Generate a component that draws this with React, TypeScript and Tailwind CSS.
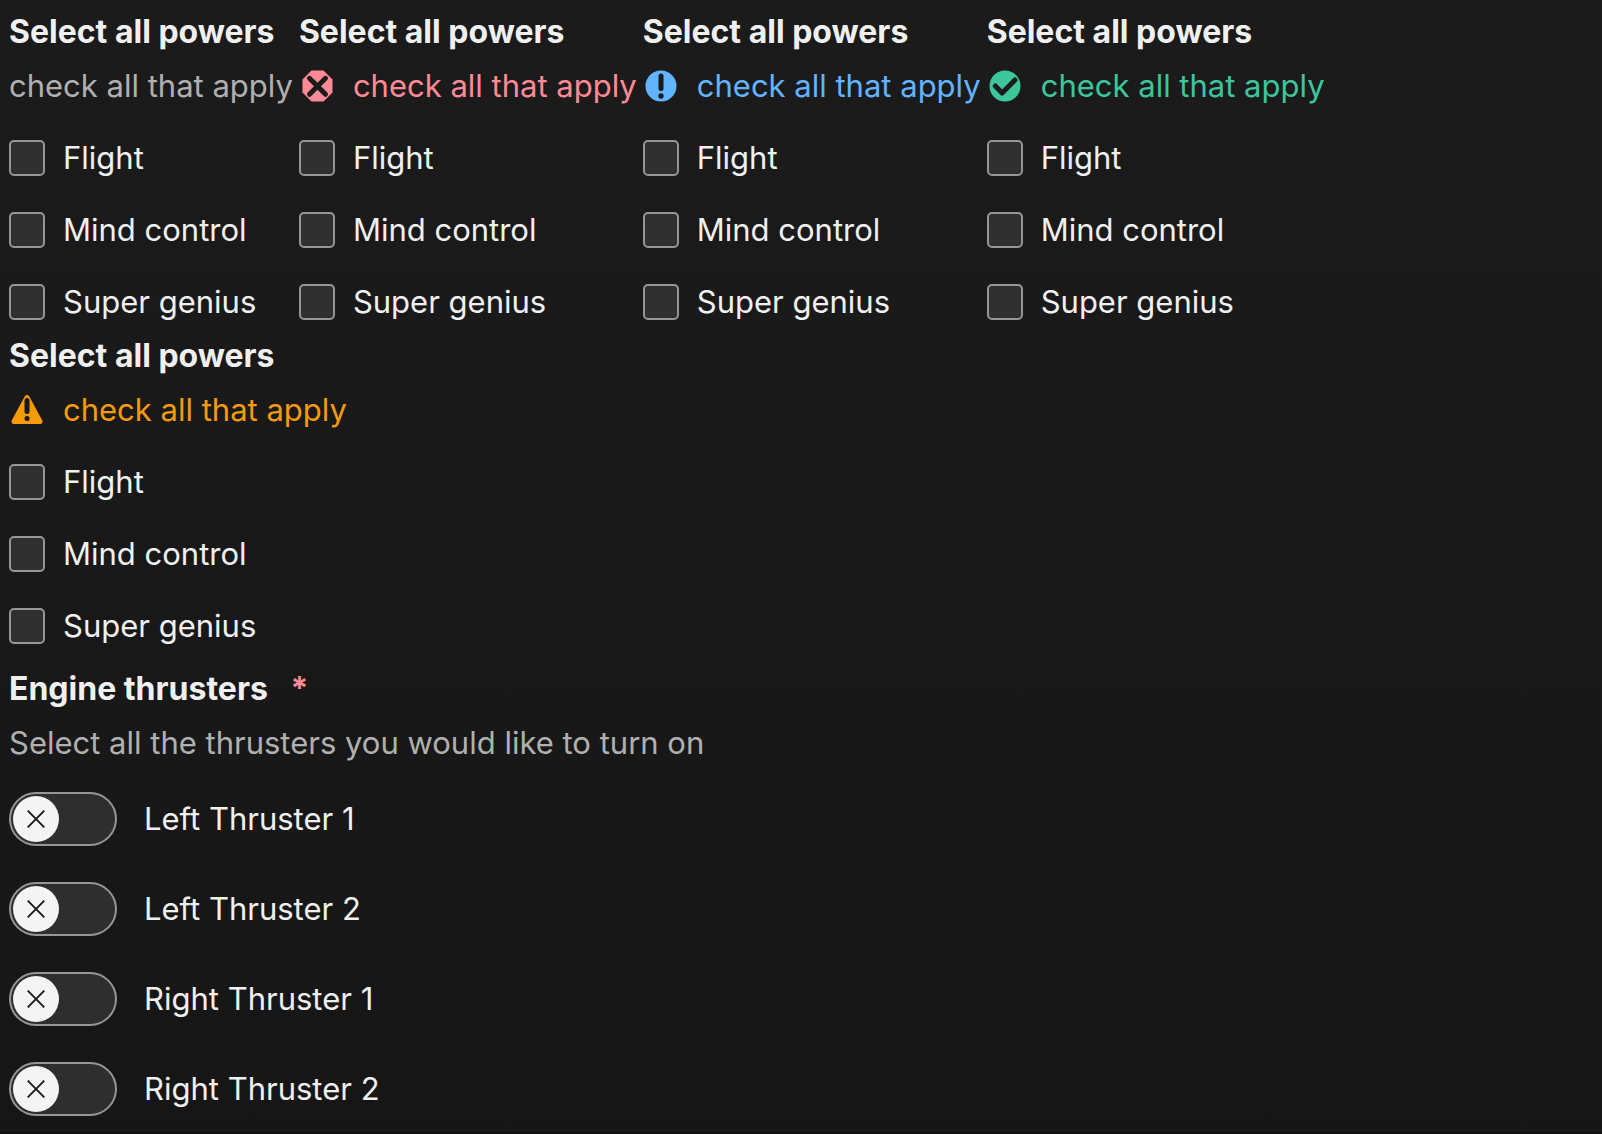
import React from "react";

type Tone = "plain" | "error" | "info" | "success" | "warning";

const toneText: Record<Tone, string> = {
  plain: "text-[#b0b0b0]",
  error: "text-[#ff8a96]",
  info: "text-[#62b4ff]",
  success: "text-[#3dc59b]",
  warning: "text-[#f49a0b]",
};

const tones: Tone[] = ["plain", "error", "info", "success", "warning"];
const powers = ["Flight", "Mind control", "Super genius"];
const thrusters = ["Left Thruster 1", "Left Thruster 2", "Right Thruster 1", "Right Thruster 2"];

function ToneIcon({ tone }: { tone: Tone }) {
  return (
    <svg viewBox="0 0 36 36" className="size-9 shrink-0" fill="currentColor" aria-hidden="true">
      {tone === "error" && (
        <>
          <path d="M12.500 2.500h12l9 9v13l-9 9h-12l-9-9v-13z" />
          <path d="M10.500 10.300 26.500 26.300M26.500 10.300 10.500 26.300" stroke="#1b1b1b" strokeWidth="5" strokeLinecap="round" />
        </>
      )}
      {tone === "info" && (
        <>
          <circle cx="18" cy="18" r="15.500" />
          <path d="M18 8v12.500" stroke="#1b1b1b" strokeWidth="5" strokeLinecap="round" />
          <circle cx="18" cy="28" r="2.700" fill="#1b1b1b" />
        </>
      )}
      {tone === "success" && (
        <>
          <circle cx="18" cy="18" r="15.500" />
          <path d="m8.300 18 6.800 7L28 12" fill="none" stroke="#1b1b1b" strokeWidth="5" strokeLinecap="round" strokeLinejoin="round" />
        </>
      )}
      {tone === "warning" && (
        <>
          <path d="M18 5.500 31 29.500H5z" stroke="currentColor" strokeWidth="5" strokeLinejoin="round" />
          <path d="M18 8.500v11" stroke="#191919" strokeWidth="5" strokeLinecap="round" />
          <circle cx="18" cy="26.500" r="2.500" fill="#191919" />
        </>
      )}
    </svg>
  );
}

function PowersGroup({ tone }: { tone: Tone }) {
  return (
    <fieldset className="pr-[6px] pb-[9px]">
      <legend className="h-[54px] text-[32px] font-bold leading-[54px]">Select all powers</legend>
      <p className={`flex h-[54px] items-center gap-[18px] whitespace-nowrap ${toneText[tone]}`}>
        {tone !== "plain" && <ToneIcon tone={tone} />}
        {"check all that apply"}
      </p>
      <div className="mt-[27px] flex flex-col gap-9">
        {powers.map((name) => (
          <label key={name} className="flex h-9 items-center gap-[18px] leading-9">
            <input
              type="checkbox"
              className="size-9 shrink-0 appearance-none rounded-[5px] border-2 border-[#969696] bg-[#303030] checked:bg-[#62b4ff]"
            />
            {name}
          </label>
        ))}
      </div>
    </fieldset>
  );
}

function Switch({ label }: { label: string }) {
  return (
    <label className="flex h-[54px] items-center gap-[27px]">
      <span className="flex h-[54px] w-[108px] items-center rounded-full border-2 border-[#969696] bg-[#2e2e2e] px-[2px] has-checked:justify-end">
        <input type="checkbox" role="switch" className="sr-only" />
        <span className="flex size-[46px] items-center justify-center rounded-full bg-[#f4f4f4]">
          <svg viewBox="0 0 18 18" className="size-[18px]" stroke="#161616" strokeWidth="1.800" aria-hidden="true">
            <path d="M.7.7 17.300 17.300M17.300.7.7 17.300" />
          </svg>
        </span>
      </span>
      {label}
    </label>
  );
}

export default function App() {
  return (
    <main className="min-h-screen border-b-2 border-[#100f12] bg-linear-to-b from-[#1b1b1b] to-[#161616] pt-[5px] pl-[9px] font-['Inter',sans-serif] text-[31px] text-[#f0f0f0]">
      <div className="flex flex-wrap">
        {tones.map((tone) => (
          <PowersGroup key={tone} tone={tone} />
        ))}
      </div>
      <fieldset className="mt-[9px] pb-4">
        <legend className="h-[54px] text-[32px] font-bold leading-[54px]">
          Engine thrusters <span className="ml-[15px] text-[#ff8a96]">*</span>
        </legend>
        <p className="h-[54px] leading-[54px] text-[#b0b0b0]">Select all the thrusters you would like to turn on</p>
        <div className="mt-[22px] flex flex-col gap-9">
          {thrusters.map((name) => (
            <Switch key={name} label={name} />
          ))}
        </div>
      </fieldset>
    </main>
  );
}
